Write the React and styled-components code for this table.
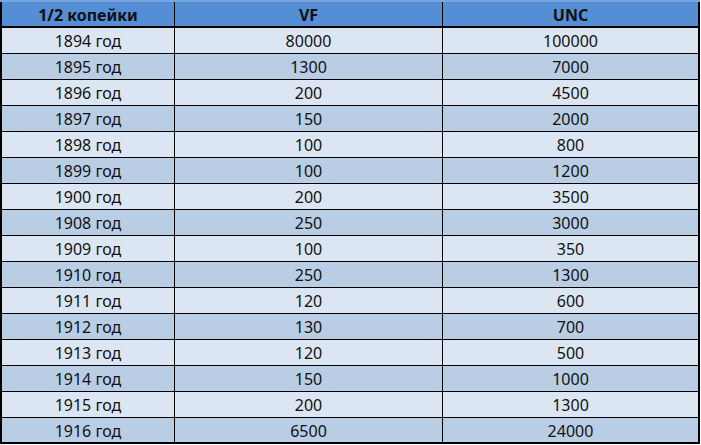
import React from "react";
import styled, { createGlobalStyle } from "styled-components";

const Global = createGlobalStyle`
  html, body { margin: 0; padding: 0; background: #ffffff; }
  body { font-family: "Noto Sans", "Open Sans", sans-serif; }
`;

const Wrap = styled.div`
  width: 700px;
  padding-top: 2px;
  background: linear-gradient(#7aa6e0, #7aa6e0) top / 700px 2px no-repeat;
`;

const Table = styled.table`
  border-collapse: separate;
  border-spacing: 0;
  width: 700px;
  table-layout: fixed;
  border-left: 2px solid #000;
  border-right: 2px solid #000;
  border-bottom: 2px solid #000;
  font-family: "Noto Sans", "Open Sans", sans-serif;
  font-size: 16px;
  color: #111;
`;

const Th = styled.th`
  background: #558ed5;
  height: 23px;
  padding: 1px 0 0;
  font-weight: 700;
  font-size: 16px;
  line-height: 1;
  text-align: center;
  border-bottom: 2px solid #000;
  border-right: ${(p) => (p.$last ? "none" : "1px solid #000")};
`;

const Td = styled.td`
  background: ${(p) => (p.$alt ? "#b9cde5" : "#dce6f2")};
  height: ${(p) => (p.$lastRow ? "23px" : "24px")};
  padding: 1px 0 0;
  text-align: center;
  line-height: 1;
  border-bottom: ${(p) => (p.$lastRow ? "none" : "1px solid #000")};
  border-right: ${(p) => (p.$last ? "none" : "1px solid #000")};
`;

const rows = [
  ["1894 год", "80000", "100000"],
  ["1895 год", "1300", "7000"],
  ["1896 год", "200", "4500"],
  ["1897 год", "150", "2000"],
  ["1898 год", "100", "800"],
  ["1899 год", "100", "1200"],
  ["1900 год", "200", "3500"],
  ["1908 год", "250", "3000"],
  ["1909 год", "100", "350"],
  ["1910 год", "250", "1300"],
  ["1911 год", "120", "600"],
  ["1912 год", "130", "700"],
  ["1913 год", "120", "500"],
  ["1914 год", "150", "1000"],
  ["1915 год", "200", "1300"],
  ["1916 год", "6500", "24000"],
];

export default function App() {
  return (
    <>
      <Global />
      <Wrap>
        <Table>
          <colgroup>
            <col style={{ width: "173px" }} />
            <col style={{ width: "268px" }} />
            <col style={{ width: "255px" }} />
          </colgroup>
          <thead>
            <tr>
              <Th>1/2 копейки</Th>
              <Th>VF</Th>
              <Th $last>UNC</Th>
            </tr>
          </thead>
          <tbody>
            {rows.map((r, i) => (
              <tr key={r[0]}>
                {r.map((c, j) => (
                  <Td key={j} $alt={i % 2 === 1} $last={j === 2} $lastRow={i === rows.length - 1}>
                    {c}
                  </Td>
                ))}
              </tr>
            ))}
          </tbody>
        </Table>
      </Wrap>
    </>
  );
}
